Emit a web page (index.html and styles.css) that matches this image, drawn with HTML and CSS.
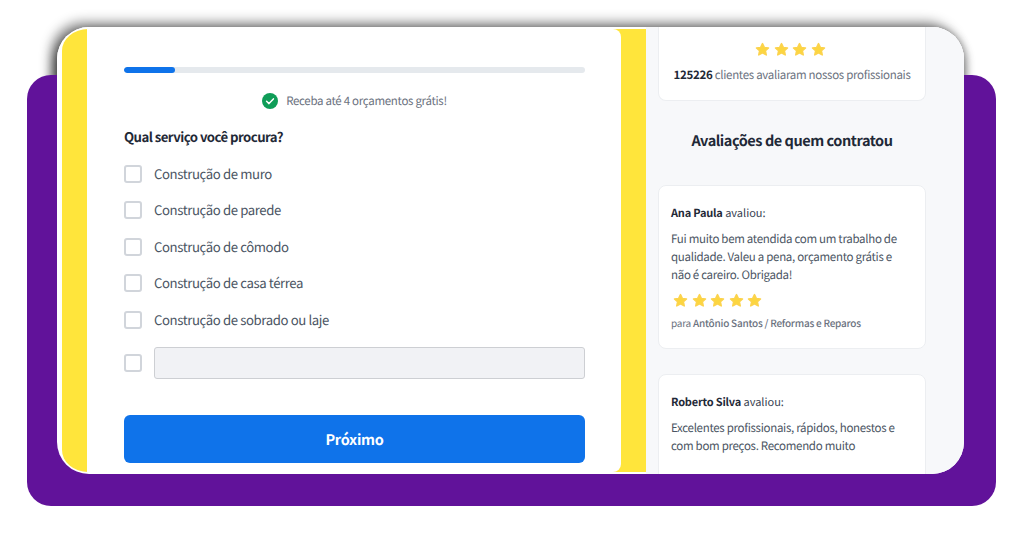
FILE: index.html
```html
<!DOCTYPE html>
<html lang="pt-BR">
<head>
<meta charset="utf-8">
<title>Orçamentos</title>
<link rel="stylesheet" href="styles.css">
</head>
<body>
<svg class="defs" width="0" height="0" aria-hidden="true">
  <defs>
    <symbol id="star" viewBox="0 0 24 24">
      <path d="M12 2.500l2.900 6.100 6.700.9-4.900 4.600 1.300 6.600-6-3.300-6 3.300 1.300-6.600-4.900-4.600 6.700-.9z" fill="#fcd63f" stroke="#fcd34d" stroke-width="2.400" stroke-linejoin="round"/>
    </symbol>
  </defs>
</svg>
<div class="stage">
  <div class="backdrop"></div>
  <main class="window">
    <section class="form-side">
      <form class="form-card">
        <div class="progress"><div class="progress-fill"></div></div>
        <p class="notice">
          <svg class="check" viewBox="0 0 16 16" aria-hidden="true"><circle cx="8" cy="8" r="8" fill="#0f9d58"/><path d="M4.600 8.300l2.400 2.300 4.400-4.700" fill="none" stroke="#fff" stroke-width="1.500" stroke-linecap="round" stroke-linejoin="round"/></svg>
          Receba até 4 orçamentos grátis!
        </p>
        <h2 class="question">Qual serviço você procura?</h2>
        <ul class="options">
          <li class="option"><span class="box"></span>Construção de muro</li>
          <li class="option"><span class="box"></span>Construção de parede</li>
          <li class="option"><span class="box"></span>Construção de cômodo</li>
          <li class="option"><span class="box"></span>Construção de casa térrea</li>
          <li class="option"><span class="box"></span>Construção de sobrado ou laje</li>
        </ul>
        <div class="other"><span class="box"></span><span class="other-input"></span></div>
        <div class="submit">Próximo</div>
      </form>
    </section>
    <aside class="sidebar">
      <div class="card summary">
        <div class="stars">
          <svg><use href="#star"/></svg><svg><use href="#star"/></svg><svg><use href="#star"/></svg><svg><use href="#star"/></svg>
        </div>
        <p class="summary-text"><b>125226</b> clientes avaliaram nossos profissionais</p>
      </div>
      <h2 class="side-title">Avaliações de quem contratou</h2>
      <article class="card review">
        <p class="review-head"><b>Ana Paula</b> avaliou:</p>
        <p class="review-text">Fui muito bem atendida com um trabalho de qualidade. Valeu a pena, orçamento grátis e não é careiro. Obrigada!</p>
        <div class="stars">
          <svg><use href="#star"/></svg><svg><use href="#star"/></svg><svg><use href="#star"/></svg><svg><use href="#star"/></svg><svg><use href="#star"/></svg>
        </div>
        <p class="review-for">para <b>Antônio Santos / Reformas e Reparos</b></p>
      </article>
      <article class="card review">
        <p class="review-head"><b>Roberto Silva</b> avaliou:</p>
        <p class="review-text">Excelentes profissionais, rápidos, honestos e com bom preços. Recomendo muito</p>
      </article>
    </aside>
  </main>
</div>
</body>
</html>
```

FILE: styles.css
```css
* { box-sizing: border-box; }
html, body { margin: 0; height: 100%; background: #fff; overflow: hidden; }
body { font-family: "Noto Sans CJK SC", "Noto Sans", sans-serif; color: #4b5563; text-rendering: geometricPrecision; }
.defs { display: block; height: 0; }
p, h2, ul { margin: 0; padding: 0; }
b { font-weight: 500; }

.stage { position: relative; width: 1024px; height: 536px; padding: 27px 60px 62px 57px; }
.backdrop { position: absolute; left: 27px; top: 75px; width: 969px; height: 431px; background: #61129a; border-radius: 24px; }
.window {
  position: relative; display: flex; height: 447px; background: #fff; border-radius: 32px; overflow: hidden;
}
.stage::before {
  content: ""; position: absolute; left: 57px; top: 27px; width: 907px; height: 447px; border-radius: 32px;
  box-shadow: -6px -5px 12px rgba(0,0,0,.42), -3px 6px 12px rgba(0,0,0,.6), 3px 3px 8px rgba(0,0,0,.28);
}
.form-side {
  width: 584px; margin: 2px 0 2px 5px; padding: 0 25px; background: #ffe53b; border-radius: 26px 0 0 26px / 22px 0 0 22px; flex: none;
}
.form-card { height: 100%; background: #fff; border-radius: 0 8px 8px 0; padding: 38px 36px 0 37px; width: 534px; }
.progress { height: 6px; background: #e5e9ed; border-radius: 3px; overflow: hidden; }
.progress-fill { width: 51px; height: 100%; background: #0f73ea; border-radius: 3px; }
.notice { display: flex; align-items: center; justify-content: center; gap: 8px; font-size: 11.500px; letter-spacing: -.3px; line-height: 16px; margin-top: 20px; color: #6b7280; }
.check { width: 16px; height: 16px; flex: none; }
.question { margin-top: 18px; font-size: 13.200px; letter-spacing: -.55px; line-height: 20px; font-weight: 700; color: #1f2937; }
.options { list-style: none; margin-top: 17.500px; }
.option { display: flex; align-items: center; gap: 12px; height: 18px; margin-bottom: 18.500px; font-size: 13.200px; letter-spacing: -.4px; line-height: 18px; color: #4b5563; }
.box { width: 18px; height: 18px; flex: none; background: #fff; border: 2px solid #d1d5db; border-radius: 3px; }
.other { display: flex; align-items: center; gap: 12px; margin-top: 8px; }
.other-input { flex: 1; height: 32px; background: #f1f2f5; border: 1px solid #cdcfd3; border-radius: 3px; }
.submit { margin-top: 36px; height: 48px; display: flex; align-items: center; justify-content: center; background: #0f73ea; border-radius: 6px; color: #fff; font-size: 14.500px; letter-spacing: -.3px; font-weight: 700; }

.sidebar { flex: 1; background: #f7f8fa; padding: 0 38px 0 12px; overflow: hidden; }
.card { background: #fff; border: 1px solid #eceef1; border-radius: 8px; }
.summary { height: 74px; border-top: 0; border-radius: 0 0 8px 8px; padding-top: 15px; text-align: center; }
.stars { display: flex; gap: 3.500px; }
.stars svg { width: 15px; height: 15px; display: block; flex: none; }
.summary .stars { justify-content: center; padding-right: 3px; }
.summary-text { margin-top: 10px; font-size: 11.500px; letter-spacing: -.3px; line-height: 16px; color: #6b7280; }
.summary-text b { color: #1f2937; font-weight: 700; }
.side-title { margin: 30px 0 34px; font-size: 14.500px; letter-spacing: -.45px; line-height: 20px; font-weight: 700; color: #1f2937; text-align: center; }
.review { padding: 19px 16px 0 12px; height: 164px; margin-bottom: 25px; }
.review-head { font-size: 11px; line-height: 16px; color: #374151; }
.review-head b { color: #1f2937; font-weight: 700; letter-spacing: -.2px; }
.review-text { margin-top: 9px; font-size: 11.500px; letter-spacing: -.3px; line-height: 18px; color: #4b5563; }
.review .stars { margin-top: 9px; padding-left: 2px; }
.review-for { margin-top: 8px; font-size: 10px; letter-spacing: -.23px; line-height: 14px; color: #6b7280; }
```
